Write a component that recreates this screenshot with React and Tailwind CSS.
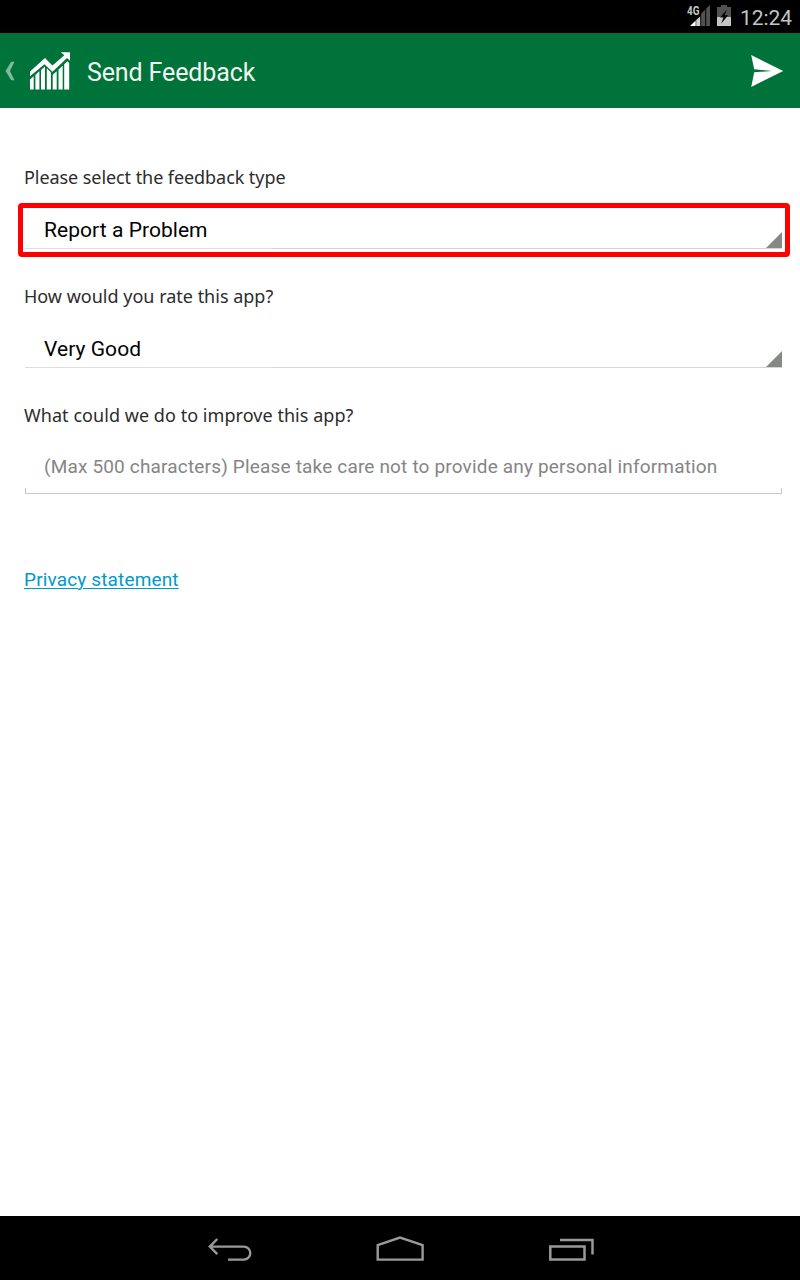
import React from 'react';

function StatusBar() {
  return (
    <div className="flex h-[33px] shrink-0 items-start justify-end bg-black pr-2">
      <svg className="mt-1 h-6 w-[24px]" viewBox="0 0 24 24">
        <path d="M3 22 8.7 16.5V22Z" fill="#fff" />
        <path d="M9.2 16 13.2 12.5V22H9.2Z" fill="#cfcfcf" />
        <path d="M14.2 9.5 18.2 5.5V22H14.2ZM19.2 4.5 23 1V22H19.2Z" fill="#505250" />
        <text x="0" y="11.2" textLength="12.5" lengthAdjust="spacingAndGlyphs" fontSize="13" fontWeight="700" fill="#c4c4c4" className="font-['Roboto',sans-serif]">4G</text>
      </svg>
      <svg className="ml-[6px] mt-1 h-6 w-[14px]" viewBox="0 0 14 24">
        <path d="M4 1H10V3H14V13H0V3H4Z" fill="#505250" />
        <path d="M0 13H14V22H0Z" fill="#c4c4c4" />
        <path d="M9.8 5.5 3.2 13.5H6.5L4.2 19.5 11.2 11.2H7.6Z" fill="#000" />
      </svg>
      <span className="ml-[9px] mt-[3px] font-['Roboto',sans-serif] text-[21px] leading-[30px] tracking-[-0.05px] text-[#c4c4c4]">12:24</span>
    </div>
  );
}

function Header() {
  return (
    <header className="flex h-[75px] shrink-0 items-center bg-[#00733a] pl-[5px] pr-4">
      <svg className="h-5 w-[10px]" viewBox="0 0 10 20">
        <path d="M6.2 .8H9.5L5 10 9.5 19.2H6.2L.5 10Z" fill="#80b99c" />
      </svg>
      <svg className="ml-[14px] h-[40px] w-[42px]" viewBox="0 0 42 40">
        <path d="M1 20.5 16 7 23.5 14.5 35.3 4.2 31.8 1.2H41V9.8L38 7 23.5 20.8 15.5 13.2 1 25.2Z" fill="#fff" />
        <path d="M1 28.5 4.7 25.3V38.4H1ZM6.4 23.8 10.4 20.3V38.4H6.4ZM12 19 16 15.6V38.4H12ZM17.8 17.3 21.9 21.3V38.4H17.8ZM23.7 23.8 27.7 20.3V38.4H23.7ZM29.5 18.5 33.7 14.8V38.4H29.5ZM35.2 13.2 38.5 10.2 40.2 12V38.4H35.2Z" fill="#fff" />
      </svg>
      <h1 className="ml-4 mt-[5px] font-['Roboto',sans-serif] text-[25px] font-normal leading-8 tracking-[-0.12px] text-[#f1f5f2]">Send Feedback</h1>
      <svg className="ml-auto h-[34px] w-[34px]" viewBox="0 0 34 34">
        <path d="M1.2 1 33.2 17 1.2 33 4.2 18.3 22 17 4.2 15.2Z" fill="#fff" />
      </svg>
    </header>
  );
}

function Label({ children, className }) {
  return <div className={`h-[30px] whitespace-nowrap pl-2 font-['Noto_Sans',sans-serif] text-[18px] leading-[30px] text-[#2c2c2c] ${className}`}>{children}</div>;
}

function Spinner({ value, highlighted }) {
  return (
    <div className={`flex h-[54px] w-[772px] flex-col rounded-[4px] border-[5px] pl-[2px] pr-[3px] ${highlighted ? 'border-[#ff0000]' : 'border-transparent'}`}>
      <div className="flex h-[40px] items-end justify-between">
        <span className="mb-[3px] pl-[19px] font-['Roboto',sans-serif] text-[21px] leading-[30px] tracking-[0.05px] text-black">{value}</span>
        <svg className="h-[16px] w-4" viewBox="0 0 16 16"><path d="M0 16 16 0V16Z" fill="#868886" /></svg>
      </div>
      <div className="flex h-[1px]">
        <div className="w-[247px] bg-[#e0dddf]" />
        <div className="grow bg-[#d4d4d4]" />
      </div>
    </div>
  );
}

function NavBar() {
  return (
    <nav className="flex h-16 shrink-0 items-center bg-black pl-[207px]">
      <svg className="h-8 w-[48px]" viewBox="0 0 48 32" fill="none" stroke="#999" strokeWidth="2.4">
        <path d="M10.3 7 2.8 14.6 10.3 22.2M2.8 14.6H36.8A6.4 6.4 0 0 1 36.8 27.6H21" />
      </svg>
      <svg className="ml-[119px] h-8 w-[52px]" viewBox="0 0 52 32" fill="none" stroke="#999" strokeWidth="2.4">
        <path d="M3.7 27.6V13L26 5.5 48.6 13V27.6Z" />
      </svg>
      <svg className="ml-[121px] h-8 w-[50px]" viewBox="0 0 50 32" fill="none" stroke="#999" strokeWidth="2.5">
        <path d="M3.3 14.6H37.5V27.5H3.3ZM13 8H45.5V22.5" />
      </svg>
    </nav>
  );
}

export default function App() {
  return (
    <div className="flex h-[1280px] w-[800px] flex-col overflow-hidden bg-white">
      <StatusBar />
      <Header />
      <main className="flex grow flex-col pl-4">
        <Label className="mt-[54px] tracking-[-0.07px]">Please select the feedback type</Label>
        <div className="ml-[2px] mt-[11px]"><Spinner value="Report a Problem" highlighted /></div>
        <Label className="mt-6">How would you rate this app?</Label>
        <div className="ml-[2px] mt-[11px]"><Spinner value="Very Good" /></div>
        <Label className="mt-6 tracking-[0.05px]">What could we do to improve this app?</Label>
        <div className="ml-[9px] mt-[22px] flex h-[42px] w-[757px] flex-col justify-between">
          <span className="whitespace-nowrap pl-[19px] font-['Roboto',sans-serif] text-[19px] leading-[30px] tracking-[0.17px] text-[#858585]">(Max 500 characters) Please take care not to provide any personal information</span>
          <div className="h-[6px] border border-t-0 border-[#c8caca]" />
        </div>
        <a className="ml-2 mt-[74px] w-max font-['Roboto',sans-serif] text-[19px] leading-[24px] tracking-[0.15px] text-[#0099cc] underline decoration-1 underline-offset-2">Privacy statement</a>
      </main>
      <NavBar />
    </div>
  );
}
